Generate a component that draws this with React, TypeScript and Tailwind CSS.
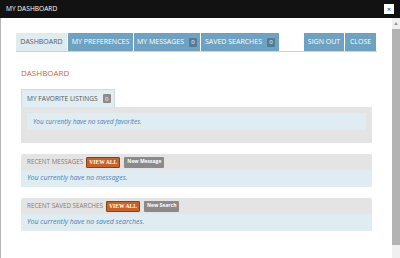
import React from "react";

const font = { fontFamily: '"Open Sans", "Liberation Sans", sans-serif' };

function Badge({ dark }: { dark?: boolean }) {
  return (
    <span
      className={`ml-[5px] inline-flex h-[9px] min-w-[8px] items-center justify-center rounded-[1px] px-[2px] text-[6px] leading-none text-white ${
        dark ? "bg-[#8c8c8c]" : "bg-[#4f7e9b]"
      }`}
    >
      0
    </span>
  );
}

function Section({ title, button, text }: { title: string; button: string; text: string }) {
  return (
    <div className="ml-[5px] mt-[11px] w-[351px]">
      <div className="flex h-[16px] items-center whitespace-nowrap rounded-t-[2px] bg-[#e4e4e4] pl-[6px] text-[6.3px] text-[#8a7a70]">
        {title}
        <span
          className="ml-[3px] flex h-[11px] items-center rounded-[1px] border border-[#8e3f14] bg-[#c7622a] px-[2px] text-[5.6px] font-bold text-white"
          style={{ fontFamily: '"Liberation Serif", serif' }}
        >
          VIEW ALL
        </span>
        <span className="ml-[4px] flex h-[11px] items-center rounded-[1px] bg-[#8a8a8a] px-[3px] text-[5px] font-bold text-white">
          {button}
        </span>
      </div>
      <div className="flex h-[17px] items-center whitespace-nowrap bg-[#dfedf3] pl-[6px] text-[7px] italic text-[#4a7db3]">
        {text}
      </div>
    </div>
  );
}

export default function App() {
  return (
    <div className="flex h-[258px] w-[400px] flex-col overflow-hidden bg-white" style={font}>
      <div className="flex h-[18px] shrink-0 items-center justify-between bg-[#121212] pl-[6px] pr-[6px]">
        <span className="text-[6.6px] text-white">MY DASHBOARD</span>
        <span className="flex h-[10px] w-[10px] items-center justify-center bg-white text-[7px] leading-none text-[#333]">
          ×
        </span>
      </div>
      <div className="flex min-h-0 flex-1">
        <div className="flex-1 border-l border-[#b5b5b5] pl-[15px] pr-[15px] pt-[15px]">
          <div className="flex h-[19px] w-[361px] items-stretch whitespace-nowrap border-b border-[#d0d0d0] text-[7px]">
            <div className="flex w-[51px] items-center justify-center bg-[#deebf1] text-[#5a5a5a]">DASHBOARD</div>
            <div className="ml-[1px] flex w-[65px] items-center justify-center bg-[#6fa2c1] text-white">MY PREFERENCES</div>
            <div className="ml-[1px] flex w-[66px] items-center justify-center bg-[#6fa2c1] text-white">
              MY MESSAGES<Badge />
            </div>
            <div className="ml-[1px] flex w-[78px] items-center justify-center bg-[#6fa2c1] text-white">
              SAVED SEARCHES<Badge />
            </div>
            <div className="flex-1" />
            <div className="flex w-[40px] items-center justify-center bg-[#6fa2c1] text-white">SIGN OUT</div>
            <div className="ml-[1px] flex w-[31px] items-center justify-center bg-[#6fa2c1] text-white">CLOSE</div>
            <div className="w-[1px]" />
          </div>

          <div className="ml-[5px] mt-[15px] text-[8px] text-[#c8663c]">DASHBOARD</div>

          <div className="ml-[5px] mt-[10px] w-[351px]">
            <div className="flex h-[18px] w-[94px] items-center whitespace-nowrap border border-b-0 border-[#c9dde6] bg-[#e0edf3] pl-[5px] text-[6.6px] text-[#555]">
              MY FAVORITE LISTINGS<Badge dark />
            </div>
            <div className="bg-[#e4e4e4] px-[6px] pb-[13px] pt-[6px]">
              <div className="flex h-[17px] items-center whitespace-nowrap bg-[#dfedf3] pl-[6px] text-[6.5px] italic text-[#4a7db3]">
                You currently have no saved favorites.
              </div>
            </div>
          </div>

          <Section title="RECENT MESSAGES" button="New Message" text="You currently have no messages." />
          <Section title="RECENT SAVED SEARCHES" button="New Search" text="You currently have no saved searches." />
        </div>
        <div className="flex w-[8px] flex-col bg-[#f0f0f0]">
          <div className="flex h-[10px] items-center justify-center">
            <div className="h-0 w-0 border-x-[2px] border-b-[3px] border-x-transparent border-b-[#999]" />
          </div>
          <div className="mt-[1px] h-[216px] bg-[#b3b3b3]" />
        </div>
      </div>
    </div>
  );
}
